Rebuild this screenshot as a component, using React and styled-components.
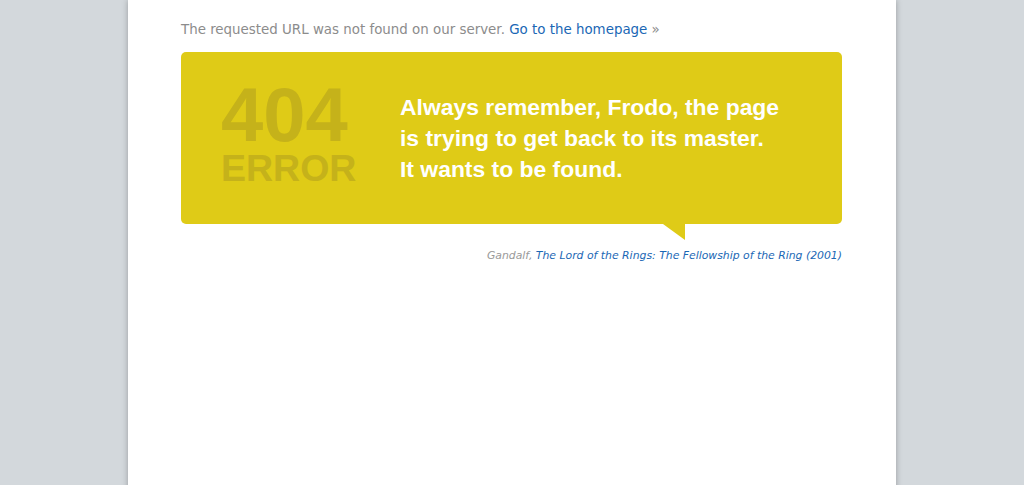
import React from 'react';
import styled, { createGlobalStyle } from 'styled-components';

const GlobalStyle = createGlobalStyle`
  html, body {
    margin: 0;
    padding: 0;
    background: #d3d8dc;
  }
  body {
    font-family: "DejaVu Sans", Verdana, sans-serif;
  }
`;

const Page = styled.div`
  width: 661px;
  min-height: 485px;
  margin: 0 auto;
  padding: 20px 54px 0 53px;
  background: #fff;
  box-shadow: 0 0 6px rgba(0, 0, 0, 0.28);
  box-sizing: content-box;
`;

const Notice = styled.p`
  margin: 0 0 12px;
  font-size: 13.4px;
  line-height: 20px;
  color: #8c8c8c;
`;

const Link = styled.a`
  color: #1a67b5;
  text-decoration: none;
`;

const Bubble = styled.div`
  position: relative;
  display: flex;
  height: 172px;
  background: #dfcb17;
  border-radius: 5px;

  &::after {
    content: '';
    position: absolute;
    top: 100%;
    left: 482px;
    border-style: solid;
    border-width: 0 22px 16px 0;
    border-color: transparent #dfcb17 transparent transparent;
  }
`;

const Code = styled.div`
  width: 219px;
  padding: 30px 0 0 40px;
  box-sizing: border-box;
  font-family: "Liberation Sans", Arial, sans-serif;
  font-weight: bold;
  color: #c5b21a;
`;

const Big = styled.div`
  font-size: 76px;
  line-height: 66px;
`;

const Small = styled.div`
  margin-top: 3px;
  font-size: 37.5px;
  line-height: 34px;
`;

const Quote = styled.blockquote`
  margin: 0;
  padding: 40px 0 0;
  font-family: "Liberation Sans", Arial, sans-serif;
  font-weight: bold;
  font-size: 22.9px;
  line-height: 31px;
  color: #fff;
`;

const Source = styled.p`
  margin: 25px 0 0;
  text-align: right;
  font-size: 10.85px;
  font-style: italic;
  color: #999;
`;

export default function App() {
  return (
    <>
      <GlobalStyle />
      <Page>
        <Notice>
          The requested URL was not found on our server. <Link href="#">Go to the homepage</Link> »
        </Notice>
        <Bubble>
          <Code>
            <Big>404</Big>
            <Small>ERROR</Small>
          </Code>
          <Quote>
            Always remember, Frodo, the page
            <br />
            is trying to get back to its master.
            <br />
            It wants to be found.
          </Quote>
        </Bubble>
        <Source>
          Gandalf, <Link href="#">The Lord of the Rings: The Fellowship of the Ring (2001)</Link>
        </Source>
      </Page>
    </>
  );
}
